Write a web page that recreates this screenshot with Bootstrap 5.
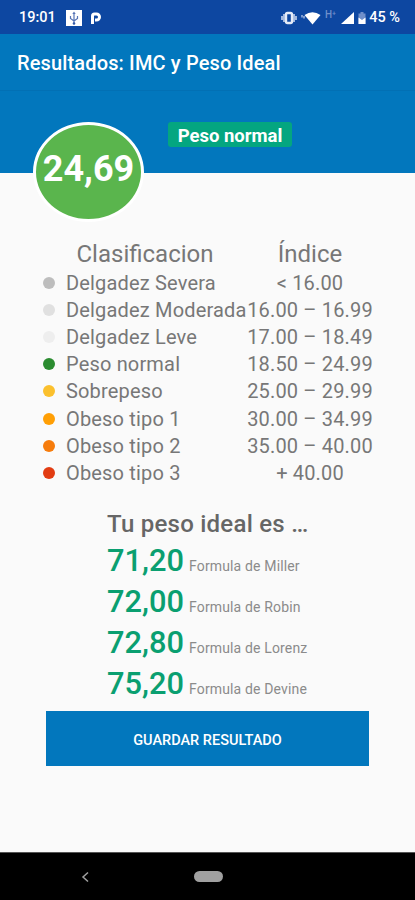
<!DOCTYPE html>
<html lang="es">
<head>
<meta charset="utf-8">
<meta name="viewport" content="width=device-width, initial-scale=1">
<title>Resultados: IMC y Peso Ideal</title>
<link href="https://cdn.jsdelivr.net/npm/bootstrap@5.3.0/dist/css/bootstrap.min.css" rel="stylesheet">
<style>
body{font-family:Roboto,"Liberation Sans",sans-serif;background:#fafafa;color:#777;line-height:1}
.screen{height:900px;overflow:hidden}
.status{height:34px;background:#0d47a1;padding:3px 15px 0 19px;font-size:14.5px;font-weight:500}
.appbar{height:57px;background:#0277bd;padding:2px 17px 0;font-size:20px;font-weight:500;letter-spacing:.14px;border-bottom:1px solid #0270b4}
.hero{height:82px;background:#0277bd;padding:31px 0 0 33px}
.score{width:111px;height:100px;border:3px solid #fff;border-radius:50%;background:#5ab54d;font-size:36px;font-weight:700;padding-bottom:6px}
.verdict{height:25px;width:124px;margin-left:24px;border-radius:3px;background:#04a680;font-size:18.5px;font-weight:700;padding-top:3px}
.ranges{margin:65px 0 0 43px;width:330px}
.ranges .heading{height:31px;font-size:24px}
.range-row{height:27.2px;font-size:20px;letter-spacing:.17px}
.dot{width:12px;height:12px;border-radius:50%;margin-right:11px;flex:none}
.col-name{width:204px;white-space:nowrap}
.col-index{width:126px;text-align:center;white-space:nowrap}
.ideal{margin:23px 0 0 107px}
.ideal h2{font-size:24px;font-weight:500;line-height:28px;letter-spacing:.25px;color:#666;margin-bottom:2px}
.formula{height:41px;color:#777}
.formula strong{font-size:30.8px;font-weight:500;color:#0a9f70;line-height:41px;width:82px}
.formula span{font-size:14px;letter-spacing:.15px;color:#8b8b8b}
.save{margin:7px 46px 0;width:323px;height:55px;background:#0277bd;font-size:14.5px;font-weight:500;border:0;padding:12px 0 6px}
.navkeys{height:48px;background:#000;border-top:1px solid #555;padding-left:81px}
.home{width:29px;height:11px;background:#a0a0a0;margin-left:103px}
</style>
</head>
<body>
<div class="screen d-flex flex-column">
  <div class="status d-flex align-items-center text-white flex-shrink-0">
    <span class="me-auto d-flex align-items-center"><span>19:01</span>
      <svg class="ms-2" width="48" height="18" viewBox="0 0 48 18"><rect x="2" y="0" width="16" height="16" fill="#fff"/><path d="M10 3v10M6.500 6v2.500L10 11M13.500 6v2.500L10 11" fill="none" stroke="#5674b5" stroke-width="1.200"/><path d="M10 1.500l1.700 2.500H8.300z" fill="#5674b5"/><circle cx="10" cy="13.500" r="1.300" fill="#3159a8"/><path d="M28.500 14V6Q28.500 4 30.500 4H32.500A3 3 0 0 1 32.500 10H31" fill="none" stroke="#fff" stroke-width="3"/></svg>
    </span>
    <svg width="88" height="18" viewBox="0 0 88 18" fill="#fff"><rect x="5" y="3" width="6" height="10" rx="1.500" fill="none" stroke="#e4ebf7" stroke-width="2.400"/><path d="M3 4v8M13 4v8" stroke="#d3def2" stroke-width="1.500"/><path d="M1 6v4M15 6v4" stroke="#d3def2" stroke-width="1.500"/><path d="M21 5v2.500M23 6v2.500" stroke="#b8c8e8" stroke-width="1.300"/><path d="M23.500 5Q31.500-.5 39.500 5L31.500 14.500z"/><text x="44" y="8" font-size="10" fill="#6f8fca">H⁺</text><path d="M73 2v12H60z"/><path d="M79.500 2h3v1.500h2V14h-7V3.500h2z" fill="#6f8fca"/><path d="M77.500 7.500l3.500 2.500L84.500 7.500V14h-7z"/></svg>
    <span>45 %</span>
  </div>
  <header class="appbar d-flex align-items-center text-white flex-shrink-0">Resultados: IMC y Peso Ideal</header>
  <section class="hero d-flex align-items-start flex-shrink-0">
    <div class="score d-flex align-items-center justify-content-center text-white flex-shrink-0">24,69</div>
    <div class="verdict d-flex align-items-center justify-content-center text-white">Peso normal</div>
  </section>
  <section class="ranges">
    <div class="heading d-flex align-items-center"><div class="col-name text-center">Clasificacion</div><div class="col-index">Índice</div></div>
    <div class="range-row d-flex align-items-center"><div class="col-name d-flex align-items-center"><i class="dot" style="background:#bdbdbd"></i>Delgadez Severa</div><div class="col-index">&lt; 16.00</div></div>
    <div class="range-row d-flex align-items-center"><div class="col-name d-flex align-items-center"><i class="dot" style="background:#e0e0e0"></i>Delgadez Moderada</div><div class="col-index">16.00 – 16.99</div></div>
    <div class="range-row d-flex align-items-center"><div class="col-name d-flex align-items-center"><i class="dot" style="background:#eeeeee"></i>Delgadez Leve</div><div class="col-index">17.00 – 18.49</div></div>
    <div class="range-row d-flex align-items-center"><div class="col-name d-flex align-items-center"><i class="dot" style="background:#2b8c30"></i>Peso normal</div><div class="col-index">18.50 – 24.99</div></div>
    <div class="range-row d-flex align-items-center"><div class="col-name d-flex align-items-center"><i class="dot" style="background:#fbc02d"></i>Sobrepeso</div><div class="col-index">25.00 – 29.99</div></div>
    <div class="range-row d-flex align-items-center"><div class="col-name d-flex align-items-center"><i class="dot" style="background:#ff9f05"></i>Obeso tipo 1</div><div class="col-index">30.00 – 34.99</div></div>
    <div class="range-row d-flex align-items-center"><div class="col-name d-flex align-items-center"><i class="dot" style="background:#f67c0c"></i>Obeso tipo 2</div><div class="col-index">35.00 – 40.00</div></div>
    <div class="range-row d-flex align-items-center"><div class="col-name d-flex align-items-center"><i class="dot" style="background:#e23c12"></i>Obeso tipo 3</div><div class="col-index">+ 40.00</div></div>
  </section>
  <section class="ideal">
    <h2>Tu peso ideal es …</h2>
    <div class="formula d-flex align-items-baseline"><strong>71,20</strong><span>Formula de Miller</span></div>
    <div class="formula d-flex align-items-baseline"><strong>72,00</strong><span>Formula de Robin</span></div>
    <div class="formula d-flex align-items-baseline"><strong>72,80</strong><span>Formula de Lorenz</span></div>
    <div class="formula d-flex align-items-baseline"><strong>75,20</strong><span>Formula de Devine</span></div>
  </section>
  <button class="save btn btn-primary rounded-0 flex-shrink-0">GUARDAR RESULTADO</button>
  <nav class="navkeys d-flex align-items-center mt-auto flex-shrink-0">
    <svg width="10" height="12" viewBox="0 0 10 12" fill="none" stroke="#a0a0a0" stroke-width="1.500"><path d="M7 1.500L2 6l5 4.500"/></svg>
    <div class="home rounded-pill"></div>
  </nav>
</div>
<script src="https://cdn.jsdelivr.net/npm/bootstrap@5.3.0/dist/js/bootstrap.bundle.min.js"></script>
</body>
</html>
